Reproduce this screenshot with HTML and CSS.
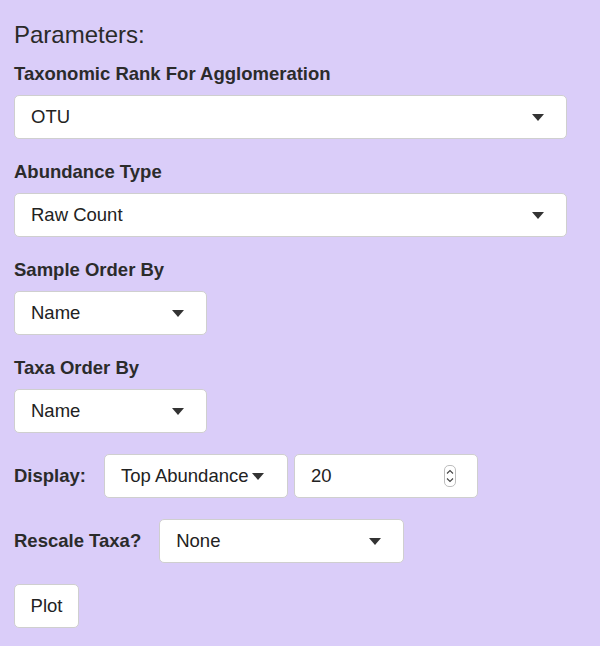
FILE: index.html
```html
<!DOCTYPE html>
<html>
<head>
<meta charset="utf-8">
<link rel="stylesheet" href="styles.css">
</head>
<body>
<div class="panel">
  <div class="title">Parameters:</div>
  <div class="group">
    <div class="label">Taxonomic Rank For Agglomeration</div>
    <div class="select full"><span>OTU</span><span class="caret"></span></div>
  </div>
  <div class="group">
    <div class="label">Abundance Type</div>
    <div class="select full"><span>Raw Count</span><span class="caret"></span></div>
  </div>
  <div class="group">
    <div class="label">Sample Order By</div>
    <div class="select small"><span>Name</span><span class="caret"></span></div>
  </div>
  <div class="group last">
    <div class="label">Taxa Order By</div>
    <div class="select small"><span>Name</span><span class="caret"></span></div>
  </div>
  <div class="row">
    <div class="label inline display-label">Display:</div>
    <div class="select mid top"><span>Top Abundance</span><span class="caret"></span></div>
    <div class="select mid number"><span>20</span>
      <span class="spin"><svg width="10" height="20" viewBox="0 0 10 20"><path d="M2 7.5 L5 4.5 L8 7.5 M2 12.5 L5 15.5 L8 12.5" fill="none" stroke="#444" stroke-width="1.1"/></svg></span>
    </div>
  </div>
  <div class="row">
    <div class="label inline rescale-label">Rescale Taxa?</div>
    <div class="select rescale"><span>None</span><span class="caret"></span></div>
  </div>
  <div class="row">
    <div class="button">Plot</div>
  </div>
</div>
</body>
</html>
```
FILE: styles.css
```css
html, body {
  margin: 0;
  padding: 0;
  background: #dacdf9;
}
body {
  font-family: "Liberation Sans", Arial, sans-serif;
  color: #222;
}
.panel {
  padding: 22px 14px 0 14px;
  width: 553px;
}
.title {
  font-size: 24px;
  line-height: 26px;
  color: #2a2a2a;
  margin-bottom: 16px;
}
.group {
  margin-bottom: 23px;
}
.group.last {
  margin-bottom: 21px;
}
.label {
  font-weight: bold;
  font-size: 18.5px;
  line-height: 20px;
  color: #2b2b2b;
  margin-bottom: 11px;
}
.label.inline {
  margin-bottom: 0;
}
.select {
  box-sizing: border-box;
  height: 44px;
  background: #fff;
  border: 1px solid #cfcfcf;
  border-radius: 5px;
  display: flex;
  align-items: center;
  justify-content: space-between;
  padding: 0 22px 0 16px;
  font-size: 18.5px;
  color: #222;
  white-space: nowrap;
}
.select.full { width: 553px; }
.select.small { width: 193px; }
.select.mid { width: 184px; }
.select.top { padding-right: 23px; }
.select.rescale { width: 245px; }
.caret {
  width: 0;
  height: 0;
  border-left: 6.5px solid transparent;
  border-right: 6.5px solid transparent;
  border-top: 7px solid #333;
  margin-top: 1px;
  flex-shrink: 0;
}
.row {
  display: flex;
  align-items: center;
  margin-bottom: 21px;
}
.display-label {
  margin-right: 18px;
}
.row .select.mid + .select.mid {
  margin-left: 6px;
}
.number {
  padding-right: 21px;
}
.spin {
  box-sizing: border-box;
  width: 12px;
  height: 22px;
  border: 1px solid #bdbdbd;
  border-radius: 5px;
  display: flex;
  align-items: center;
  justify-content: center;
}
.spin svg { display: block; }
.rescale-label {
  margin-right: 18px;
}
.button {
  box-sizing: border-box;
  height: 44px;
  width: 65px;
  background: #fff;
  border: 1px solid #cfcfcf;
  border-radius: 5px;
  display: flex;
  align-items: center;
  justify-content: center;
  font-size: 18.5px;
  color: #222;
}
```
